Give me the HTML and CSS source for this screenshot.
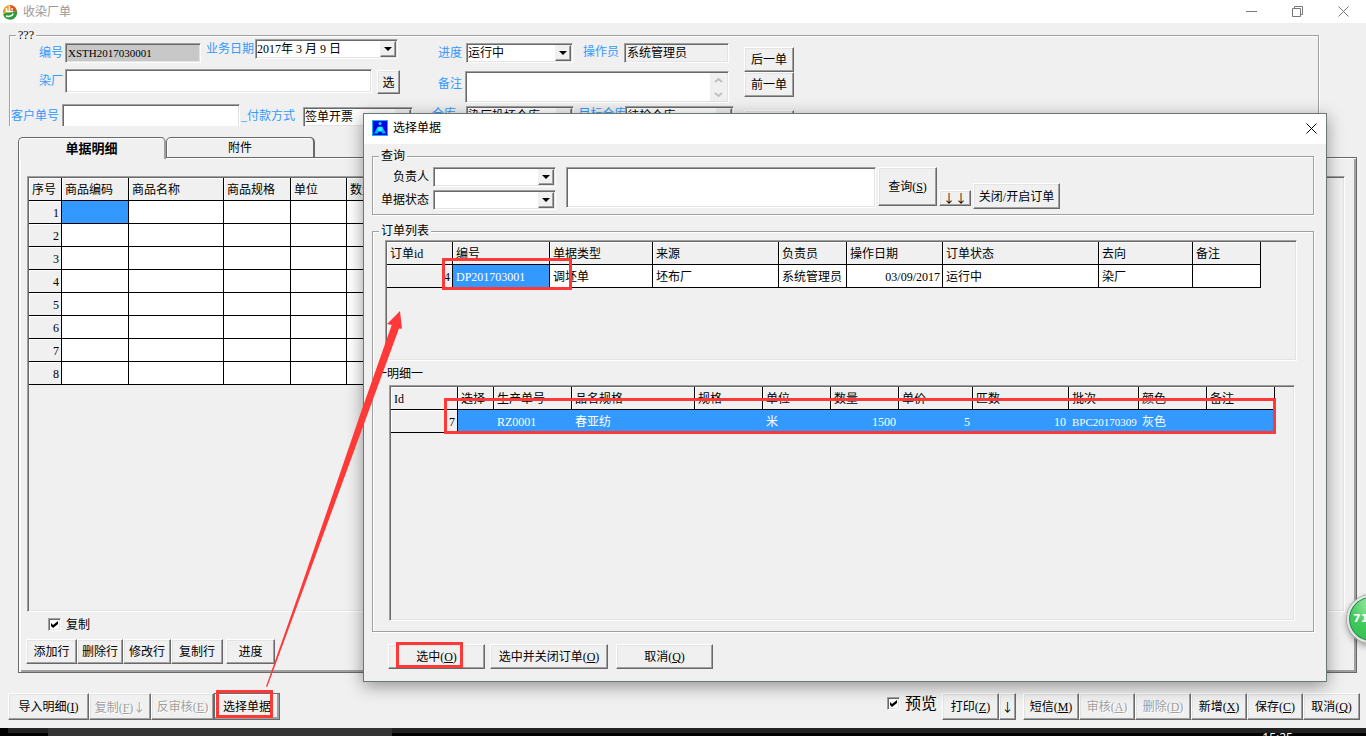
FILE: index.html
```html
<!DOCTYPE html>
<html lang="zh-CN">
<head>
<meta charset="utf-8">
<title>收染厂单</title>
<link rel="stylesheet" href="styles.css">
</head>
<body>
<div class="app">
  <header class="titlebar">
    <svg class="logo" width="16" height="16" viewBox="0 0 16 16" aria-hidden="true">
      <path d="M1 9A7 7 0 0 1 8 1V8L6 10Z" fill="#f0a020"/>
      <path d="M8 1A7 7 0 0 1 15 7L8 8Z" fill="#e0521c"/>
      <path d="M1 10C5 8 10 8 15 7A7 7 0 0 1 1 10Z" fill="#2f9a3a"/>
      <path d="M4.500 4V7.500H11M7.500 2V7.500M10 4V6" stroke="#fff" stroke-width="1.500" fill="none"/>
      <path d="M4 12C7 13 11 12 11 9.500" stroke="#fff" stroke-width="1.500" fill="none"/>
    </svg>
    <h1 class="title">收染厂单</h1>
    <div class="window-controls">
      <button aria-label="最小化"><svg width="11" height="11" viewBox="0 0 11 11"><path d="M0 5.500H11"/></svg></button>
      <button aria-label="还原"><svg width="11" height="11" viewBox="0 0 11 11"><path d="M.5 2.500H8.500V10.500H.5ZM2.500 2.500V.5H10.500V8.500H8.500"/></svg></button>
      <button aria-label="关闭窗口"><svg width="11" height="11" viewBox="0 0 11 11"><path d="M.5.5L10.500 10.500M10.500.5L.5 10.500"/></svg></button>
    </div>
  </header>

  <div class="form-area">
    <fieldset class="order-form">
      <legend>???</legend>
      <div class="form-left">
        <div class="row row-top">
          <div class="pair low"><label class="lead" for="no">编号</label><input id="no" class="field no code" value="XSTH2017030001" readonly></div>
          <div class="pair"><label class="date-label" for="date">业务日期</label><span class="combo date"><select id="date"><option>2017年 3 月 9 日</option></select><span class="drop"></span></span></div>
        </div>
        <div class="row row-mid">
          <label class="lead factory-label" for="factory">染厂</label><input id="factory" class="field factory"><button class="btn pick">选</button>
        </div>
        <div class="row row-low">
          <label class="customer-label" for="customer">客户单号</label><input id="customer" class="field customer"><label class="pay-label" for="pay">_付款方式</label><span class="combo pay"><select id="pay"><option>签单开票</option></select><span class="drop"></span></span>
        </div>
      </div>
      <div class="form-mid">
        <div class="row">
          <label class="mid-label" for="progress">进度</label><span class="combo progress"><select id="progress"><option>运行中</option></select><span class="drop"></span></span><label class="operator-label" for="operator">操作员</label><input id="operator" class="field operator" value="系统管理员" readonly>
        </div>
        <div class="row memo-row">
          <label class="mid-label" for="memo">备注</label>
          <div class="field memo"><textarea id="memo"></textarea>
            <svg width="17" height="28" viewBox="0 0 17 28" aria-hidden="true"><path d="M5 9L8.500 6L12 9M5 20L8.500 23L12 20"/></svg></div>
        </div>
        <div class="row store-row">
          <label class="mid-label" for="store">仓库</label><span class="combo store"><select id="store"><option>染厂投坯仓库</option></select><span class="drop"></span></span><label class="target-label" for="target">目标仓库</label><span class="combo store"><select id="target"><option>待检仓库</option></select><span class="drop"></span></span>
        </div>
      </div>
      <div class="form-nav">
        <button class="btn">后一单</button>
        <button class="btn">前一单</button>
        <button class="btn nav-extra" aria-label="更多"></button>
      </div>
    </fieldset>
  </div>

  <main class="tabs">
    <div class="tab-strip" role="tablist">
      <button class="tab active" role="tab" aria-selected="true">单据明细</button>
      <button class="tab" role="tab" aria-selected="false">附件</button>
    </div>
    <section class="panel">
      <div class="grid-box">
        <table class="grid main-grid">
          <colgroup><col class="w33"><col class="w67"><col class="w95"><col class="w67"><col class="w56"><col class="w67"></colgroup>
          <thead><tr><th>序号</th><th>商品编码</th><th>商品名称</th><th>商品规格</th><th>单位</th><th>数量</th></tr></thead>
          <tbody>
            <tr><th class="num">1</th><td class="sel"></td><td></td><td></td><td></td><td></td></tr>
            <tr><th class="num">2</th><td></td><td></td><td></td><td></td><td></td></tr>
            <tr><th class="num">3</th><td></td><td></td><td></td><td></td><td></td></tr>
            <tr><th class="num">4</th><td></td><td></td><td></td><td></td><td></td></tr>
            <tr><th class="num">5</th><td></td><td></td><td></td><td></td><td></td></tr>
            <tr><th class="num">6</th><td></td><td></td><td></td><td></td><td></td></tr>
            <tr><th class="num">7</th><td></td><td></td><td></td><td></td><td></td></tr>
            <tr><th class="num">8</th><td></td><td></td><td></td><td></td><td></td></tr>
          </tbody>
        </table>
      </div>
      <label class="check copy"><input type="checkbox" checked>复制</label>
      <div class="row-actions">
        <button class="btn w51">添加行</button><button class="btn w46">删除行</button><button class="btn w48">修改行</button><button class="btn w52">复制行</button><button class="btn w49 apart">进度</button>
      </div>
    </section>
  </main>

  <footer class="toolbar">
    <button class="btn w81">导入明细(<u>I</u>)</button><button class="btn w62" disabled>复制(<u>F</u>)<span class="glyph">↓</span></button><button class="btn w63" disabled>反审核(<u>E</u>)</button><button class="btn default w66">选择单据</button>
    <label class="check preview"><input type="checkbox" checked>预览</label>
    <button class="btn w57">打印(<u>Z</u>)</button><button class="btn w17"><span class="glyph">↓</span></button>
    <button class="btn w56 group">短信(<u>M</u>)</button><button class="btn w56" disabled>审核(<u>A</u>)</button><button class="btn w56" disabled>删除(<u>D</u>)</button><button class="btn w56">新增(<u>X</u>)</button><button class="btn w56">保存(<u>C</u>)</button><button class="btn w57">取消(<u>Q</u>)</button>
  </footer>
  <div class="taskbar"><span class="task-start"></span><span class="task-search"></span><span class="task-rest"></span><span class="clock">15:25</span></div>
</div>

<div class="dialog" role="dialog" aria-labelledby="dialog-title">
  <header class="dialog-head">
    <svg width="16" height="16" viewBox="0 0 16 16" aria-hidden="true"><rect width="16" height="16" fill="#12b4f4"/><rect x="1" y="1" width="14" height="14" fill="#0000e8"/><circle cx="8" cy="3.500" r="1.500" fill="#00e0f8"/><path d="M6 6L2 13.500H6L6.500 11.500H9.500L10 13.500H14L10 6L9.500 8H6.500Z" fill="#00b8e0"/><circle cx="8" cy="9" r="2.500" fill="#38f0ff"/></svg>
    <h2 class="dialog-title" id="dialog-title">选择单据</h2>
    <button class="dialog-close" aria-label="关闭"><svg width="11" height="11" viewBox="0 0 11 11"><path d="M.5.5L10.500 10.500M10.500.5L.5 10.500"/></svg></button>
  </header>
  <fieldset class="query">
    <legend>查询</legend>
    <div class="filters">
      <label for="owner">负责人</label><span class="combo"><select id="owner"><option></option></select><span class="drop"></span></span>
      <label for="state">单据状态</label><span class="combo"><select id="state"><option></option></select><span class="drop"></span></span>
    </div>
    <textarea class="field keywords" aria-label="查询内容"></textarea>
    <button class="btn search">查询(<u>S</u>)</button>
    <button class="btn arrows"><span class="glyph">↓</span><span class="glyph">↓</span></button>
    <button class="btn toggle">关闭/开启订单</button>
  </fieldset>
  <fieldset class="orders">
    <legend>订单列表</legend>
    <div class="grid-box order-box">
      <table class="grid">
        <colgroup><col class="w66"><col class="w97"><col class="w103"><col class="w126"><col class="w68"><col class="w96"><col class="w156"><col class="w94"><col class="w68"></colgroup>
        <thead><tr><th>订单id</th><th>编号</th><th>单据类型</th><th>来源</th><th>负责员</th><th>操作日期</th><th>订单状态</th><th>去向</th><th>备注</th></tr></thead>
        <tbody><tr><th class="num">4</th><td class="sel">DP201703001</td><td>调坯单</td><td>坯布厂</td><td>系统管理员</td><td class="num">03/09/2017</td><td>运行中</td><td>染厂</td><td></td></tr></tbody>
      </table>
    </div>
    <h3 class="detail-title">一明细一</h3>
    <div class="grid-box detail-box">
      <table class="grid">
        <colgroup><col class="w67"><col class="w36"><col class="w78"><col class="w123"><col class="w68"><col class="w68"><col class="w68"><col class="w74"><col class="w96"><col class="w70"><col class="w68"><col class="w68"></colgroup>
        <thead><tr><th>Id</th><th>选择</th><th>生产单号</th><th>品名规格</th><th>规格</th><th>单位</th><th>数量</th><th>单价</th><th>匹数</th><th>批次</th><th>颜色</th><th>备注</th></tr></thead>
        <tbody><tr class="picked"><th class="num">7</th><td></td><td>RZ0001</td><td>春亚纺</td><td></td><td>米</td><td class="num">1500</td><td class="num">5</td><td class="num">10</td><td class="code">BPC20170309</td><td>灰色</td><td></td></tr></tbody>
      </table>
    </div>
  </fieldset>
  <div class="dialog-actions">
    <button class="btn w97">选中(<u>O</u>)</button>
    <button class="btn w118">选中并关闭订单(<u>O</u>)</button>
    <button class="btn w97">取消(<u>Q</u>)</button>
  </div>
</div>

<div class="badge">71</div>

<svg class="marks" width="1366" height="736" viewBox="0 0 1366 736" aria-hidden="true">
  <path class="box" d="M443.500 259.500H570.500V288.500H443.500ZM445.500 399.500H1274.500V432.500H445.500ZM397.500 643.500H461.500V666.500H397.500ZM217.500 691.500H271.500V716.500H217.500Z"/>
  <path class="arrow" d="M400 311L387 324L391.700 325L360 415L300 590L266 686.500L267.200 687L303 590L361 432L399 328.500L402 328.700Z"/>
</svg>
</body>
</html>
```
FILE: styles.css
```css
* { box-sizing: border-box; }

body {
  margin: 0;
  position: relative;
  overflow: hidden;
  background: #f0f0f0;
  color: #000;
  font: 12px/14px "Liberation Serif", "Noto Sans CJK SC", serif;
}

button, input, select, textarea {
  font: inherit;
  color: inherit;
  margin: 0;
  padding: 0;
  border: 0;
  border-radius: 0;
  background: none;
}

textarea { resize: none; overflow: hidden; }
h1, h2, h3 { margin: 0; font: inherit; }
fieldset { margin: 0; padding: 0; min-width: 0; border: 1px solid #a0a0a0; box-shadow: 1px 1px 0 #fff, inset 1px 1px 0 #fff; }
legend { padding: 0 2px; margin-left: 6px; line-height: 12px; background: #f0f0f0; }

.app { display: flex; flex-direction: column; min-height: 100vh; }

/* window title bar */
.titlebar { display: flex; align-items: center; height: 23px; padding-left: 2px; gap: 5px; background: #fff; }
.title { flex: 1; color: #999; }
.window-controls { display: flex; }
.window-controls button { width: 46px; height: 20px; display: grid; place-items: center; }
.window-controls svg, .dialog-close svg { fill: none; stroke: #777; }

/* shared controls */
.btn {
  flex: none;
  white-space: nowrap;
  padding-top: 1px;
  background: #f0f0f0;
  border: 1px solid;
  border-color: #fff #696969 #696969 #fff;
  box-shadow: inset -1px -1px 0 #a0a0a0, inset 1px 1px 0 #e3e3e3;
}
.btn:disabled { color: #a0a0a0; text-shadow: 1px 1px 0 #fff; }
.btn.default { border-color: #696969; box-shadow: inset -2px -2px 0 #a0a0a0, inset 1px 1px 0 #fff; }
.glyph { font-family: "Noto Sans CJK SC", sans-serif; }

.field, .combo, .grid-box {
  background: #fff;
  border: 1px solid;
  border-color: #a0a0a0 #fff #fff #a0a0a0;
  box-shadow: inset 1px 1px 0 #696969, inset -1px -1px 0 #e3e3e3;
}
.field { padding: 1px 2px; }
.combo { display: flex; height: 20px; padding: 1px; }
.combo select { flex: 1; min-width: 0; appearance: none; }
.drop {
  flex: none;
  width: 16px;
  display: grid;
  place-items: center;
  background: #f0f0f0;
  border: 1px solid;
  border-color: #f0f0f0 #696969 #696969 #f0f0f0;
  box-shadow: inset -1px -1px 0 #a0a0a0;
}
.drop::before { content: ""; border: 4px solid transparent; border-top-color: #000; border-bottom: 0; }

.check { display: flex; align-items: center; gap: 5px; }
.check input {
  appearance: none;
  width: 13px;
  height: 13px;
  background: #fff;
  border: 1px solid;
  border-color: #a0a0a0 #fff #fff #a0a0a0;
  box-shadow: inset 1px 1px 0 #696969, inset -1px -1px 0 #e3e3e3;
}
.check input:checked::before {
  content: "";
  display: block;
  width: 7px;
  height: 7px;
  margin: 2px;
  background: #000;
  clip-path: polygon(0 29%, 29% 57%, 100% 0, 100% 43%, 29% 100%, 0 71%);
}

/* order form */
.form-area { height: 103px; padding: 9px 47px 0 9px; overflow: hidden; }
.order-form { display: flex; border-bottom: 0; height: 94px; }
.order-form legend { line-height: 6px; }
.order-form label { color: #3399ff; white-space: nowrap; }
.row { display: flex; }
.form-left { width: 421px; }
.form-mid { width: 303px; padding-top: 5px; }
.pair { display: flex; align-items: center; align-self: flex-start; }
.pair.low { align-self: flex-end; }
.row-top { height: 25px; padding-top: 1px; }
.lead { width: 55px; padding-right: 2px; text-align: right; }
.no { width: 136px; height: 20px; background: #c8c8c8; }
.code { font-size: 11px; }
.date-label { padding: 0 1px 0 5px; }
.date { width: 143px; }
.row-mid { margin-top: 6px; height: 25px; }
.factory-label { padding-top: 5px; }
.factory { width: 307px; height: 24px; }
.pick { width: 23px; height: 24px; margin: 1px 0 0 5px; }
.row-low { margin-top: 10px; }
.customer-label { width: 52px; padding: 5px 0 0 1px; }
.customer { width: 178px; height: 30px; }
.pay-label { width: 63px; padding: 5px 0 0 1px; }
.pay { width: 110px; margin-top: 3px; }
.mid-label { width: 35px; padding: 3px 4px 0 0; text-align: right; }
.progress { width: 107px; }
.operator-label { padding: 2px 5px 0 10px; }
.operator { width: 105px; height: 20px; padding-bottom: 3px; background: #f0f0f0; }
.memo-row { margin-top: 8px; }
.memo-row .mid-label { width: 34px; padding: 6px 3px 0 0; }
.memo { width: 264px; height: 32px; display: flex; padding: 1px; }
.memo textarea { flex: 1; min-width: 0; height: 28px; }
.memo svg { background: #f0f0f0; fill: none; stroke: #c0c0c0; stroke-width: 2; }
.store-row { margin-top: 3px; }
.store-row .mid-label { padding: 1px 10px 0 0; width: 35px; }
.store { width: 109px; }
.target-label { width: 51px; padding: 1px 0 0 4px; }
.form-nav { width: 50px; margin-left: 10px; padding-top: 9px; display: flex; flex-direction: column; }
.form-nav .btn { height: 25px; }
.form-nav .nav-extra { margin-top: 13px; }

/* tabbed detail area */
.tabs { flex: 1; display: flex; flex-direction: column; margin: 11px 9px 0 18px; }
.tab-strip { display: flex; height: 20px; }
.tab { width: 149px; height: 20px; background: #f0f0f0; border: 1px solid #696969; border-width: 1px 2px 0 1px; border-radius: 5px 5px 0 0; box-shadow: inset 1px 1px 0 #fff; }
.tab.active { width: 148px; height: 22px; font-weight: bold; font-size: 13px; z-index: 1; border-right-color: #a0a0a0; }
.panel {
  flex: 1;
  display: flex;
  flex-direction: column;
  padding: 18px 9px 8px 7px;
  border: 1px solid #696969;
  box-shadow: inset 2px 1px 0 #fff, inset -2px -2px 0 #a0a0a0;
}
.grid-box { padding: 1px; background: #f0f0f0; overflow: hidden; }
.panel .grid-box { flex: 1; margin: 0 2px 0 1px; }
.copy { margin: 5px 0 0 22px; height: 15px; }
.row-actions { display: flex; margin-top: 7px; height: 25px; }
.row-actions .apart { margin-left: 3px; }

/* grids */
.grid { table-layout: fixed; width: 0; border-collapse: separate; border-spacing: 0; }
.grid th, .grid td {
  height: 23px;
  padding: 2px 2px 0 3px;
  overflow: hidden;
  white-space: nowrap;
  text-align: left;
  font-weight: normal;
  background: #fff;
  border: 0 solid #000;
  border-width: 0 1px 1px 0;
}
.grid th { background: #f0f0f0; box-shadow: inset 1px 1px 0 #fff; }
.grid .num { text-align: right; }
.grid .sel, .grid .picked td { background: #3399ff; color: #fff; }
.grid .picked td { border-color: #3399ff; }

/* bottom bars */
.toolbar { display: flex; height: 27px; margin: 20px 6px 8px 8px; }
.preview { margin: 0 5px 6px auto; font-size: 16px; gap: 5px; }
.toolbar .group { margin-left: 7px; }
.taskbar { display: flex; height: 8px; overflow: hidden; background: #000; position: relative; }
.task-start { width: 40px; height: 5px; margin-left: 8px; background: #222; }
.task-search { width: 344px; background: #333; }
.task-rest { flex: 1; height: 5px; background: #222; }
.clock { position: absolute; right: 73px; top: 3px; color: #fff; line-height: 14px; font-family: "Noto Sans", sans-serif; }

/* dialog window */
.dialog {
  position: absolute;
  left: 363px;
  right: 39px;
  top: 113px;
  bottom: 54px;
  display: flex;
  flex-direction: column;
  background: #f0f0f0;
  border: 1px solid #6b7772;
  box-shadow: 0 4px 16px rgba(0, 0, 0, .4);
}
.dialog-head { display: flex; align-items: center; gap: 5px; height: 30px; padding: 0 0 2px 8px; background: #fff; }
.dialog-title { flex: 1; }
.dialog-close { width: 30px; height: 28px; display: grid; place-items: center; }
.dialog-close svg { stroke: #000; }
.dialog fieldset { margin: 6px 12px 0 8px; }
.dialog .query { display: flex; align-items: flex-start; padding: 5px 0 4px; }
.filters { display: grid; grid-template-columns: 56px 123px; gap: 3px 4px; }
.filters label { text-align: right; line-height: 20px; }
.keywords { width: 310px; height: 41px; margin: 0 2px 0 10px; }
.search { width: 59px; height: 39px; }
.arrows { width: 32px; height: 16px; margin: 23px 2px 0; line-height: 12px; }
.toggle { width: 87px; height: 26px; margin-top: 16px; }
.dialog .orders { flex: 1; display: flex; flex-direction: column; margin-top: 10px; padding: 3px 0 10px; }
.order-box { height: 121px; margin: 0 16px 0 12px; }
.detail-title { margin: 6px 0 0 2px; }
.detail-box { flex: 1; margin: 4px 18px 0 16px; }
.dialog-actions { display: flex; margin: 12px 0 12px 24px; }
.dialog-actions .btn { height: 25px; }
.dialog-actions .w118 { margin: 0 8px 0 5px; }

/* floating overlays */
.badge {
  position: absolute;
  right: -29px;
  top: 595px;
  width: 48px;
  height: 48px;
  padding-left: 4px;
  color: #fff;
  font: bold 11px/44px "DejaVu Sans", sans-serif;
  border: 2px solid #e4e4e4;
  border-radius: 50%;
  background: radial-gradient(circle at 50% 15%, #a6eba6, #42c95c 50%, #35bb50);
  box-shadow: 0 0 0 1px #a8a8a8, inset 0 0 0 1px #228c5c, 0 3px 7px rgba(0, 0, 0, .4);
}
.marks { position: absolute; left: 0; top: 0; pointer-events: none; }
.marks .box { fill: none; stroke: #ff3838; stroke-width: 3; }
.marks .arrow { fill: #ff3838; }

/* column and button widths */
.w17 { width: 17px; }
.w33 { width: 33px; }
.w36 { width: 36px; }
.w46 { width: 46px; }
.w48 { width: 48px; }
.w49 { width: 49px; }
.w51 { width: 51px; }
.w52 { width: 52px; }
.w56 { width: 56px; }
.w57 { width: 57px; }
.w62 { width: 62px; }
.w63 { width: 63px; }
.w66 { width: 66px; }
.w67 { width: 67px; }
.w68 { width: 68px; }
.w70 { width: 70px; }
.w74 { width: 74px; }
.w78 { width: 78px; }
.w81 { width: 81px; }
.w94 { width: 94px; }
.w95 { width: 95px; }
.w96 { width: 96px; }
.w97 { width: 97px; }
.w103 { width: 103px; }
.w118 { width: 118px; }
.w123 { width: 123px; }
.w126 { width: 126px; }
.w156 { width: 156px; }
```
